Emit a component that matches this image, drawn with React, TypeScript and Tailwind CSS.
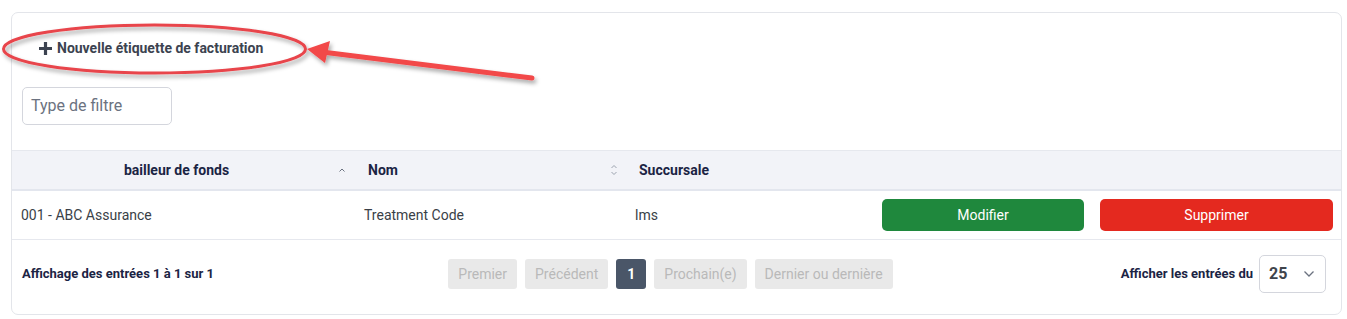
import React from "react";

function SortUp() {
  return (
    <svg width="10" height="10" viewBox="0 0 10 10" className="text-[#6b7280]">
      <path d="M2.5 6.5 L5 4 L7.5 6.5" fill="none" stroke="currentColor" strokeWidth="1" />
    </svg>
  );
}

function SortBoth() {
  return (
    <svg width="10" height="14" viewBox="0 0 10 14" className="text-[#9ca3af]">
      <path d="M2.5 5 L5 2.5 L7.5 5" fill="none" stroke="currentColor" strokeWidth="1" />
      <path d="M2.5 9 L5 11.5 L7.5 9" fill="none" stroke="currentColor" strokeWidth="1" />
    </svg>
  );
}

export default function App() {
  const font = { fontFamily: "Roboto, 'Liberation Sans', sans-serif" };
  return (
    <div className="relative w-[1347px] h-[319px] bg-white" style={font}>
      <div className="pt-[12px] pl-[11px]">
        <div className="w-[1331px] h-[303px] border border-[#e3e5ea] rounded-[7px] flex flex-col">
          <div className="pt-[17px]">
            <div className="h-[36px] flex items-center pl-[26px] gap-[4px] text-[14px] font-bold text-[#3c4350]">
              <svg width="15" height="15" viewBox="0 0 15 15">
                <path d="M7.5 1 V14 M1 7.5 H14" stroke="#3c4350" strokeWidth="3.2" />
              </svg>
              <span>Nouvelle étiquette de facturation</span>
            </div>
          </div>
          <div className="pl-[10px] mt-[21px] mb-[25px]">
            <div className="w-[150px] h-[38px] border border-[#d4d6dd] rounded-[5px] flex items-center pl-[8px] text-[16px] text-[#6b7280]">
              Type de filtre
            </div>
          </div>
          <div className="grid grid-cols-[343px_272px_246px_218px_1fr] bg-[#f2f3f8] border-t border-[#e6e8ee] border-b-2 border-b-[#e3e6ee] h-[41px] items-center text-[14px] font-bold text-[#1b2444]">
            <div className="flex items-center pr-[8px]">
              <span className="flex-1 text-center pl-[4px]">bailleur de fonds</span>
              <SortUp />
            </div>
            <div className="flex items-center pl-[13px] pr-[8px]">
              <span className="flex-1">Nom</span>
              <SortBoth />
            </div>
            <div className="pl-[12px]">Succursale</div>
            <div></div>
            <div></div>
          </div>
          <div className="grid grid-cols-[343px_272px_246px_218px_1fr] h-[49px] items-center border-b border-[#e6e8ee] text-[14px] text-[#3a3f47]">
            <div className="pl-[9px]">001 - ABC Assurance</div>
            <div className="pl-[9px]">Treatment Code</div>
            <div className="pl-[8px]">lms</div>
            <div className="pl-[9px] pr-[7px]">
              <div className="h-[32px] rounded-[5px] bg-[#1f883d] text-white flex items-center justify-center">Modifier</div>
            </div>
            <div className="pl-[9px] pr-[8px]">
              <div className="h-[32px] rounded-[5px] bg-[#e4291f] text-white flex items-center justify-center">Supprimer</div>
            </div>
          </div>
          <div className="flex items-center justify-between pl-[10px] pr-[15px] pt-[15px] pb-[21px]">
            <div className="text-[13px] font-bold text-[#1b2444] whitespace-nowrap">Affichage des entrées 1 à 1 sur 1</div>
            <div className="flex items-center gap-[8px] ml-[6px] text-[14px] text-[#b9b9b9]">
              <div className="h-[30px] px-[10px] rounded-[3px] bg-[#e9e9e9] flex items-center">Premier</div>
              <div className="h-[30px] px-[10px] rounded-[3px] bg-[#e9e9e9] flex items-center">Précédent</div>
              <div className="h-[30px] w-[30px] rounded-[3px] bg-[#4a5668] text-white font-bold flex items-center justify-center">1</div>
              <div className="h-[30px] px-[10px] rounded-[3px] bg-[#e9e9e9] flex items-center">Prochain(e)</div>
              <div className="h-[30px] px-[10px] rounded-[3px] bg-[#e9e9e9] flex items-center">Dernier ou dernière</div>
            </div>
            <div className="flex items-center gap-[6px]">
              <span className="text-[13px] font-bold text-[#1b2444] whitespace-nowrap">Afficher les entrées du</span>
              <div className="w-[67px] h-[38px] border border-[#d4d6dd] rounded-[5px] flex items-center pl-[9px] pr-[10px] justify-between">
                <span className="text-[16px] font-bold text-[#3f444c]">25</span>
                <svg width="12" height="8" viewBox="0 0 12 8">
                  <path d="M1.5 1.5 L6 6 L10.5 1.5" fill="none" stroke="#6b7280" strokeWidth="1.3" />
                </svg>
              </div>
            </div>
          </div>
        </div>
      </div>
      <svg className="absolute left-0 top-0 pointer-events-none" width="1347" height="319">
        <defs>
          <filter id="sh" x="-20%" y="-50%" width="140%" height="200%">
            <feDropShadow dx="2" dy="3" stdDeviation="2" floodColor="#000" floodOpacity="0.35" />
          </filter>
        </defs>
        <g filter="url(#sh)">
          <ellipse cx="154.5" cy="49" rx="151" ry="24" fill="none" stroke="#e8454b" strokeWidth="3" />
          <line x1="532" y1="78" x2="322" y2="52" stroke="#f2484a" strokeWidth="5" strokeLinecap="round" />
          <polygon points="307,49 330,41 325,63" fill="#f2484a" />
        </g>
      </svg>
    </div>
  );
}
